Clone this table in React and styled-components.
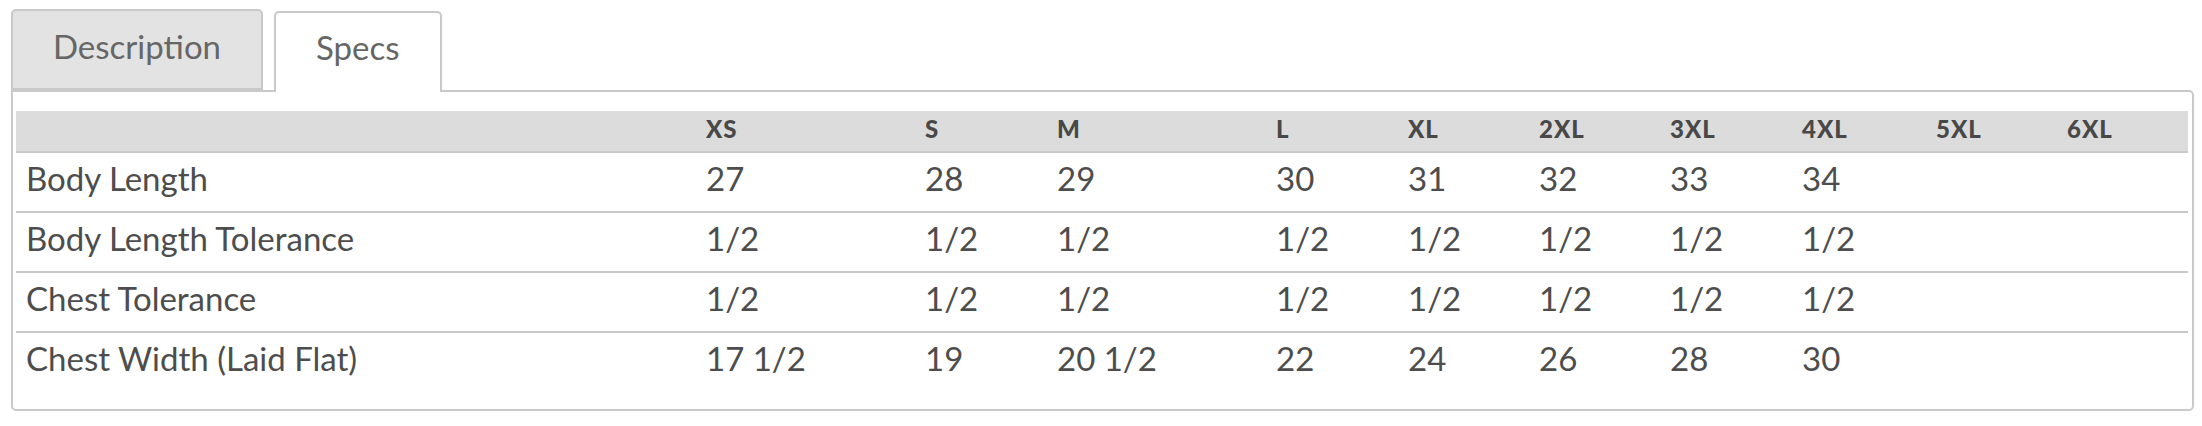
import React from 'react';
import styled, { createGlobalStyle } from 'styled-components';

const BORDER = '#c9c9c9';
const TEXT = '#4d4d4d';

const GlobalStyle = createGlobalStyle`
  html, body {
    margin: 0;
    padding: 0;
    background: #ffffff;
  }
  body {
    font-family: Lato, "Open Sans", sans-serif;
    color: ${TEXT};
  }
`;

const Page = styled.div`
  padding: 9px 8px 14px 11px;
`;

const TabList = styled.div`
  display: flex;
  align-items: flex-end;
  gap: 11px;
`;

const Tab = styled.button`
  height: 81px;
  padding: 0 40px ${({ active }) => (active ? '12px' : '8px')};
  margin-bottom: ${({ active }) => (active ? '-2px' : '0')};
  position: relative;
  z-index: ${({ active }) => (active ? 1 : 0)};
  border: 2px solid ${BORDER};
  border-bottom: ${({ active }) => (active ? 'none' : `2px solid ${BORDER}`)};
  border-radius: 5px 5px 0 0;
  background: ${({ active }) => (active ? '#ffffff' : '#e3e3e3')};
  color: #666666;
  font-family: Lato, "Open Sans", sans-serif;
  font-size: 33px;
  font-weight: 400;
  cursor: pointer;
  box-sizing: border-box;
`;

const Panel = styled.div`
  border: 2px solid ${BORDER};
  border-radius: 0 5px 5px 5px;
  padding: 19px 4px 18px 3px;
`;

const Table = styled.table`
  width: 100%;
  border-collapse: separate;
  border-spacing: 0;
  table-layout: fixed;
`;

const HeadCell = styled.th`
  background: #dcdcdc;
  height: 35px;
  padding: 0 10px 5px;
  border-bottom: 2px solid ${BORDER};
  text-align: left;
  font-size: 24px;
  font-weight: 900;
  letter-spacing: 1px;
  color: #484848;
  box-sizing: content-box;
`;

const Cell = styled.td`
  height: 49px;
  padding: 0 10px 9px;
  border-bottom: ${({ last }) => (last ? 'none' : `2px solid ${BORDER}`)};
  font-size: 33px;
  font-weight: 400;
  color: ${TEXT};
  white-space: nowrap;
  box-sizing: content-box;
`;

const sizes = ['XS', 'S', 'M', 'L', 'XL', '2XL', '3XL', '4XL', '5XL', '6XL'];
const widths = [680, 219, 132, 219, 132, 131, 131, 132, 134, 131, 131];

const rows = [
  { label: 'Body Length', values: ['27', '28', '29', '30', '31', '32', '33', '34', '', ''] },
  { label: 'Body Length Tolerance', values: ['1/2', '1/2', '1/2', '1/2', '1/2', '1/2', '1/2', '1/2', '', ''] },
  { label: 'Chest Tolerance', values: ['1/2', '1/2', '1/2', '1/2', '1/2', '1/2', '1/2', '1/2', '', ''] },
  { label: 'Chest Width (Laid Flat)', values: ['17 1/2', '19', '20 1/2', '22', '24', '26', '28', '30', '', ''] },
];

export default function App() {
  return (
    <Page>
      <GlobalStyle />
      <TabList>
        <Tab>Description</Tab>
        <Tab active>Specs</Tab>
      </TabList>
      <Panel>
        <Table>
          <colgroup>
            {widths.map((w, i) => (
              <col key={i} style={{ width: w }} />
            ))}
          </colgroup>
          <thead>
            <tr>
              <HeadCell />
              {sizes.map((s) => (
                <HeadCell key={s}>{s}</HeadCell>
              ))}
            </tr>
          </thead>
          <tbody>
            {rows.map((r, ri) => {
              const last = ri === rows.length - 1;
              return (
                <tr key={r.label}>
                  <Cell last={last}>{r.label}</Cell>
                  {r.values.map((v, i) => (
                    <Cell key={i} last={last}>{v}</Cell>
                  ))}
                </tr>
              );
            })}
          </tbody>
        </Table>
      </Panel>
    </Page>
  );
}
